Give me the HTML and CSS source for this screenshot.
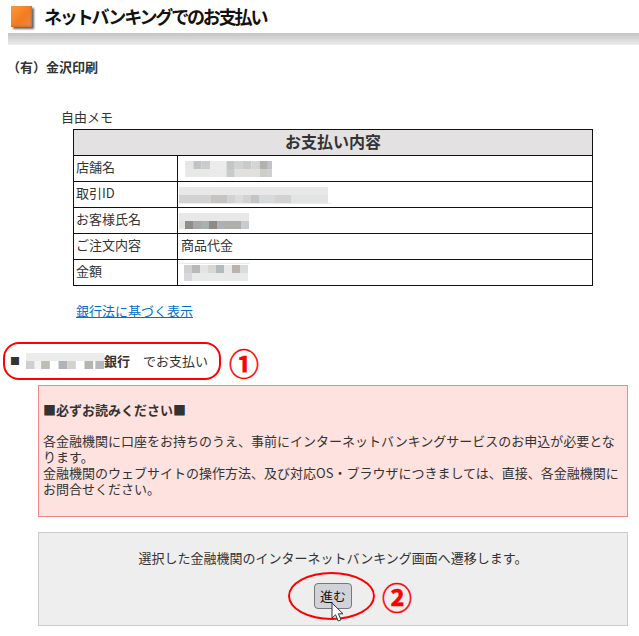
FILE: index.html
```html
<!DOCTYPE html>
<html lang="ja">
<head>
    <meta charset="UTF-8">
    <title>ネットバンキングでのお支払い</title>
    <link rel="stylesheet" href="styles.css">
</head>
<body>
    <header class="page-head">
        <span class="head-icon"></span>
        <h1>ネットバンキングでのお支払い</h1>
    </header>
    <div class="head-band"></div>

    <p class="shop">（有）金沢印刷</p>
    <p class="memo">自由メモ</p>

    <table class="detail">
        <tr><th colspan="2">お支払い内容</th></tr>
        <tr>
            <td class="label">店舗名</td>
            <td>
                <svg class="mosaic" width="91" height="20" viewBox="8 0 88 20" preserveAspectRatio="none">
                    <rect x="12" y="2" width="8" height="8" fill="#e6e6e6"/><rect x="20" y="2" width="8" height="8" fill="#c4c4c4"/><rect x="28" y="2" width="8" height="8" fill="#c8cccc"/><rect x="36" y="2" width="16" height="8" fill="#ececec"/><rect x="52" y="2" width="8" height="8" fill="#c4c6c6"/><rect x="60" y="2" width="8" height="8" fill="#d2d2d2"/><rect x="68" y="2" width="8" height="8" fill="#cacaca"/><rect x="76" y="2" width="8" height="8" fill="#d4d6d4"/><rect x="84" y="2" width="8" height="8" fill="#b4b2ae"/><rect x="92" y="2" width="4" height="8" fill="#c0c4ca"/>
                    <rect x="12" y="10" width="24" height="8" fill="#e8e8e6"/><rect x="36" y="10" width="16" height="8" fill="#eaeaea"/><rect x="52" y="10" width="8" height="8" fill="#c8cacc"/><rect x="60" y="10" width="24" height="8" fill="#e2e0dc"/><rect x="84" y="10" width="8" height="8" fill="#cccec8"/><rect x="92" y="10" width="4" height="8" fill="#ced0d4"/>
                </svg>
            </td>
        </tr>
        <tr>
            <td class="label">取引ID</td>
            <td>
                <svg class="mosaic mosaic-wide" width="153" height="20" viewBox="0 0 153 20">
                    <rect x="0" y="2" width="149" height="8" fill="#e8e8e8"/><rect x="0" y="10" width="149" height="8" fill="#d2d2d2"/>
                    <rect x="32" y="10" width="16" height="8" fill="#c6c4c2"/><rect x="56" y="10" width="8" height="8" fill="#dcdcdc"/><rect x="72" y="10" width="8" height="8" fill="#c4c4c4"/><rect x="80" y="10" width="16" height="8" fill="#d6dada"/><rect x="112" y="10" width="37" height="8" fill="#e2e4e4"/>
                    <rect x="0" y="18" width="153" height="1" fill="#ececec"/>
                </svg>
            </td>
        </tr>
        <tr>
            <td class="label">お客様氏名</td>
            <td>
                <svg class="mosaic mosaic-wide" width="70" height="20" viewBox="0 0 70 20">
                    <rect x="0" y="2" width="70" height="8" fill="#e8e8e8"/>
                    <rect x="0" y="10" width="6" height="8" fill="#e6e4de"/><rect x="6" y="10" width="8" height="8" fill="#8e8e8e"/><rect x="14" y="10" width="8" height="8" fill="#a8a8a6"/><rect x="22" y="10" width="8" height="8" fill="#a8b0b2"/><rect x="30" y="10" width="8" height="8" fill="#8e8a86"/><rect x="38" y="10" width="8" height="8" fill="#acb2b4"/><rect x="46" y="10" width="16" height="8" fill="#aeaeaa"/><rect x="62" y="10" width="8" height="8" fill="#c6ccd0"/>
                </svg>
            </td>
        </tr>
        <tr><td class="label">ご注文内容</td><td>商品代金</td></tr>
        <tr>
            <td class="label">金額</td>
            <td>
                <svg class="mosaic mosaic-wide" width="72" height="20" viewBox="0 0 72 20">
                    <rect x="0" y="0" width="71" height="1" fill="#e8e8e8"/>
                    <rect x="5" y="2" width="8" height="8" fill="#d0d0d0"/><rect x="13" y="2" width="8" height="8" fill="#b8b8b8"/><rect x="21" y="2" width="8" height="8" fill="#e4e4e4"/><rect x="29" y="2" width="8" height="8" fill="#d8d6d2"/><rect x="37" y="2" width="8" height="8" fill="#b2bac0"/><rect x="45" y="2" width="8" height="8" fill="#e8e8e8"/><rect x="53" y="2" width="8" height="8" fill="#bcb2b0"/><rect x="61" y="2" width="8" height="8" fill="#d8dcdc"/>
                    <rect x="5" y="10" width="8" height="8" fill="#d8d8dc"/><rect x="13" y="10" width="56" height="8" fill="#e8eaea"/>
                </svg>
            </td>
        </tr>
    </table>

    <p class="law"><a href="#">銀行法に基づく表示</a></p>

    <div class="bank">
        <span class="bullet">■</span>
        <svg class="mosaic" width="78" height="20" viewBox="0 0 72 20" preserveAspectRatio="none">
            <rect x="0" y="2" width="72" height="8" fill="#ececec"/>
            <rect x="0" y="10" width="8" height="8" fill="#cfcfcf"/><rect x="8" y="10" width="8" height="8" fill="#f4f4f4"/><rect x="14" y="10" width="8" height="8" fill="#bdbdb8"/><rect x="30" y="10" width="8" height="8" fill="#aeb4b8"/><rect x="38" y="10" width="8" height="8" fill="#d4d2cc"/><rect x="54" y="10" width="8" height="8" fill="#b4b4b0"/><rect x="64" y="10" width="8" height="8" fill="#b2bac0"/>
        </svg>
        <strong>銀行</strong>
        <span class="bank-pay">でお支払い</span>
    </div>

    <div class="notice">
        <p class="notice-title">■必ずお読みください■</p>
        <p>各金融機関に口座をお持ちのうえ、事前にインターネットバンキングサービスのお申込が必要となります。<br>金融機関のウェブサイトの操作方法、及び対応OS・ブラウザにつきましては、直接、各金融機関にお問合せください。</p>
    </div>

    <div class="proceed">
        <p>選択した金融機関のインターネットバンキング画面へ遷移します。</p>
        <button class="go" type="button">進む</button>
    </div>

    <!-- annotations drawn over the page -->
    <div class="mark mark-bank"></div>
    <div class="mark mark-go"></div>
    <span class="num num-1">①</span>
    <span class="num num-2">②</span>
    <svg class="cursor" width="16" height="22" viewBox="0 0 16 22">
        <path d="M1 1V16L4.6 12.8L7.2 19L10 17.8L7.4 11.8H12Z" fill="#fff" stroke="#333" stroke-width="1"/>
    </svg>
</body>
</html>
```

FILE: styles.css
```css
html, body {
    height: 636px;
    overflow: hidden;
}

body {
    position: relative;
    margin: 0;
    font-family: "Noto Sans CJK JP", "Noto Sans", sans-serif;
    font-size: 13px;
    line-height: 18px;
    color: #333;
    background: #fff;
}

p {
    margin: 0;
}

.page-head {
    display: flex;
    align-items: center;
    gap: 12px;
    height: 33px;
    padding: 0 0 1px 11px;
    box-sizing: border-box;
}

.head-icon {
    width: 21px;
    height: 21px;
    background: linear-gradient(135deg, #fb9a3c, #f47b1f 55%, #e88a4c);
    box-shadow: 2px 2px 2px #666, inset -1px -1px 2px #c9702e;
}

h1 {
    margin: 0;
    font-size: 18px;
    line-height: 24px;
    letter-spacing: -2.15px;
    color: #111;
}

.head-band {
    height: 12px;
    margin-left: 8px;
    background: linear-gradient(to bottom, #c4c4c4, #ececec);
}

.shop {
    margin: 13px 0 0 7px;
    font-weight: bold;
}

.memo {
    margin: 32px 0 0 61px;
}

.detail {
    width: 520px;
    margin: 3px 0 0 73px;
    border-collapse: collapse;
    border: 1px solid #111;
}

.detail th,
.detail td {
    box-sizing: border-box;
    height: 26px;
    padding: 0 2px 3px;
    border: 1px solid #111;
    text-align: left;
}

.detail th {
    padding-bottom: 4px;
    font-size: 16px;
    line-height: 20px;
    text-align: center;
    background: #e3e1e1;
}

.detail td {
    padding-left: 3px;
}

.detail .label {
    width: 104px;
    padding-left: 2px;
}

.mosaic {
    display: block;
    flex: none;
}

.detail .mosaic {
    margin-bottom: -3px;
}

.detail .mosaic-wide {
    margin-left: -2px;
}

.law {
    margin: 16px 0 0 76px;
}

.law a {
    color: #0070c9;
}

.bank {
    display: flex;
    align-items: center;
    height: 20px;
    margin: 31px 0 0 10px;
}

.bullet {
    width: 16px;
    font-size: 10px;
}

.bank-pay {
    margin-left: 13px;
}

.notice {
    box-sizing: border-box;
    width: 590px;
    height: 132px;
    margin: 14px 0 0 38px;
    padding: 16px 5px 0 4px;
    border: 1px solid #f08a80;
    background: #fde2df;
    line-height: 16px;
}

.notice-title {
    margin-bottom: 15px;
    font-weight: bold;
}

.proceed {
    box-sizing: border-box;
    width: 590px;
    height: 94px;
    margin: 15px 0 0 38px;
    padding-top: 16px;
    border: 1px solid #ccc;
    background: #eee;
    text-align: center;
}

.go {
    display: block;
    width: 38px;
    height: 26px;
    margin: 16px auto 0;
    padding: 0;
    border: 1px solid #777;
    border-radius: 4px;
    background: #d2d3da;
    font: inherit;
    color: #111;
}

.mark {
    position: absolute;
    box-sizing: border-box;
    border: 2.5px solid #f00;
}

.mark-bank {
    left: 3px;
    top: 342px;
    width: 218px;
    height: 38px;
    border-radius: 16px;
}

.mark-go {
    left: 288px;
    top: 572px;
    width: 87px;
    height: 48px;
    border-radius: 50%;
}

.num {
    position: absolute;
    font-size: 30px;
    line-height: 30px;
    font-weight: bold;
    color: #f00;
    -webkit-text-stroke: 0.4px #f00;
}

.num-1 {
    left: 229px;
    top: 347px;
}

.num-2 {
    left: 382px;
    top: 581px;
}

.cursor {
    position: absolute;
    left: 331px;
    top: 602px;
}
```
